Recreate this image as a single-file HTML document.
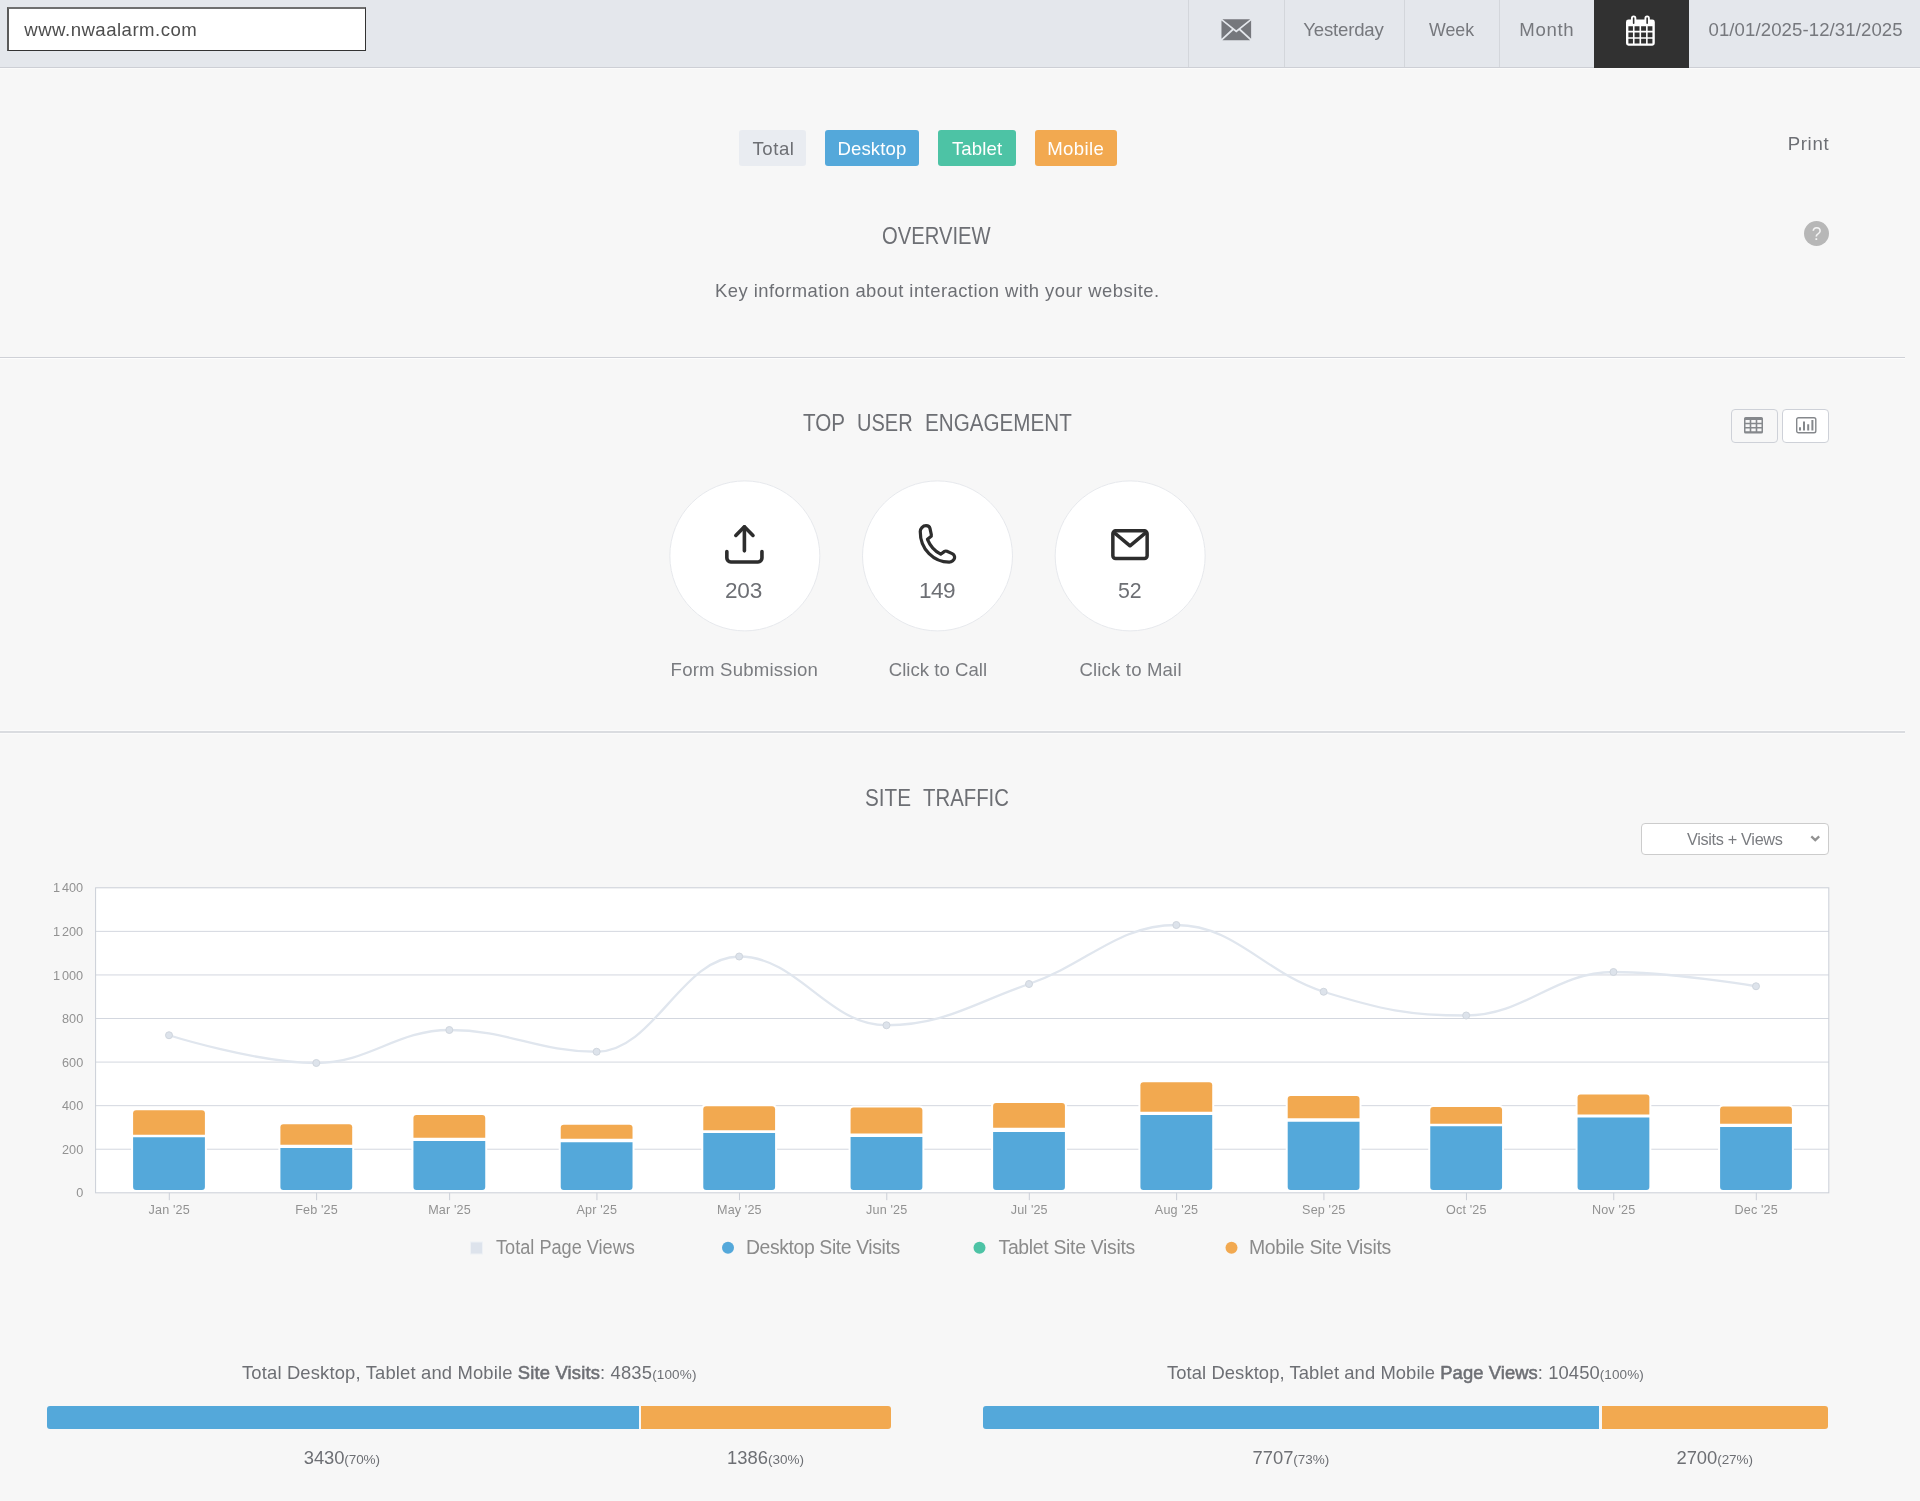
<!DOCTYPE html>
<html lang="en">
<head>
<meta charset="utf-8">
<title>Site Overview - www.nwaalarm.com</title>
<style>
html,body{margin:0;padding:0}
body{width:1920px;height:1501px;overflow:hidden;background:#f7f7f7;font-family:"Liberation Sans",sans-serif;position:relative}
#page{position:absolute;left:0;top:0;width:1920px;height:1501px;overflow:hidden;will-change:transform}
.abs{position:absolute;box-sizing:border-box}
.t{position:absolute;white-space:nowrap;line-height:0;transform-origin:0 0;font-family:"Liberation Sans",sans-serif}
.t::before{content:"";display:inline-block;width:0;height:40px}
.t b{font-weight:400;-webkit-text-stroke:0.55px currentColor}
.topbar{left:0;top:0;width:1920px;height:68px;background:#e4e7ec;border-bottom:1px solid #cdcfd5;box-shadow:0 1px 0 #fbfbfb}
.sep{top:0;width:1px;height:67px;background:#d3d6db}
.hr{left:0;width:1905px;height:2px;border-top:1px solid #cfd1d7;background:#fdfdfd}
.btn{top:130px;height:36px;border-radius:3px}
.vbtn{top:409px;width:47px;height:34px;border:1px solid #ced1d8;border-radius:4px}
.seg{top:1405.5px;height:23.5px}
svg{overflow:visible}
</style>
</head>
<body>
<div id="page">
<!-- top bar -->
<div class="abs topbar"></div>
<div class="abs" style="left:7px;top:7px;width:359px;height:44px;background:#fff;border-style:solid;border-width:2px 1px 1px 2px;border-color:#6f6f6f #333 #333 #5a5a5a"></div>
<div class="abs sep" style="left:1188px"></div>
<div class="abs sep" style="left:1284px"></div>
<div class="abs sep" style="left:1404px"></div>
<div class="abs sep" style="left:1499px"></div>
<div class="abs" style="left:1594px;top:0;width:95px;height:68px;background:#313131"></div>
<!-- envelope icon -->
<svg class="abs" style="left:1220.600px;top:19.200px" width="30.600" height="21.400" viewBox="0 0 32 22">
<path d="M1.5 0H30.5L16 11.5Z M0.5 1.5V20.5L11.5 10.2Z M31.5 1.5V20.5L20.5 10.2Z M13 11.5L16 14L19 11.5L30.5 22H1.5Z" fill="#75777c"/>
</svg>
<!-- calendar icon -->
<svg class="abs" style="left:1626px;top:15px" width="28.800" height="30.800" viewBox="0 0 29 31">
<path fill="#fff" fill-rule="evenodd" d="M2.5 4.5H5V3.2A2.7 2.7 0 0 1 10.4 3.2V4.5H18.6V3.2A2.7 2.7 0 0 1 24 3.2V4.5H26.5A2.5 2.5 0 0 1 29 7V28.5A2.5 2.5 0 0 1 26.500 31H2.500A2.500 2.500 0 0 1 0 28.500V7A2.500 2.500 0 0 1 2.500 4.500Z
M6.9 3.100V8.200A0.800 0.800 0 0 0 8.500 8.200V3.100A0.800 0.800 0 0 0 6.900 3.100Z M20.500 3.100V8.200A0.800 0.800 0 0 0 22.100 8.200V3.100A0.800 0.800 0 0 0 20.500 3.100Z
M2.400 11.300H7V15.900H2.400Z M8.600 11.300H13.600V15.900H8.600Z M15.200 11.300H20.200V15.900H15.200Z M21.800 11.300H26.600V15.900H21.800Z
M2.400 17.500H7V22.300H2.400Z M8.600 17.500H13.600V22.300H8.600Z M15.200 17.500H20.200V22.300H15.200Z M21.800 17.500H26.600V22.300H21.800Z
M2.400 23.900H7V28.600H2.400Z M8.600 23.900H13.600V28.600H8.600Z M15.200 23.900H20.200V28.600H15.200Z M21.800 23.900H26.600V28.600H21.800Z"/>
</svg>
<!-- device buttons -->
<div class="abs btn" style="left:739px;width:67px;background:#e9ecf1"></div>
<div class="abs btn" style="left:825px;width:94px;background:#54a8da"></div>
<div class="abs btn" style="left:938px;width:78px;background:#4dc3a5"></div>
<div class="abs btn" style="left:1034.5px;width:82px;background:#f2a950"></div>
<!-- help -->
<div class="abs" style="left:1804px;top:221px;width:25px;height:25px;border-radius:50%;background:#b7b7b7"></div>
<div class="t" style="left:1811.700px;top:200.300px;font-size:17.500px;color:#f4f4f4">?</div>
<div class="abs hr" style="top:357px"></div>
<div class="abs" style="left:0;top:730px;width:1905px;height:4px;background:#dadce0;border-top:1px solid #fbfbfb;border-bottom:1px solid #fbfbfb"></div>
<!-- view toggle -->
<div class="abs vbtn" style="left:1731px"></div>
<div class="abs vbtn" style="left:1782px;background:#fff"></div>
<svg class="abs" style="left:1744px;top:416.5px" width="19" height="16.5" viewBox="0 0 19 16.5">
<path fill="#85888c" fill-rule="evenodd" d="M1.6 0H17.400A1.600 1.600 0 0 1 19 1.600V14.900A1.600 1.600 0 0 1 17.400 16.500H1.600A1.600 1.600 0 0 1 0 14.900V1.600A1.600 1.600 0 0 1 1.600 0Z
M1.500 3H5.700V5.700H1.500Z M7.300 3H11.700V5.700H7.300Z M13.300 3H17.500V5.700H13.300Z
M1.500 7.300H5.700V10H1.500Z M7.300 7.300H11.700V10H7.300Z M13.300 7.300H17.500V10H13.300Z
M1.500 11.600H5.700V14.300H1.500Z M7.300 11.600H11.700V14.300H7.300Z M13.300 11.600H17.500V14.300H13.300Z"/>
</svg>
<svg class="abs" style="left:1795.500px;top:417px" width="20.500" height="16.500" viewBox="0 0 20.500 16.500">
<rect x="0.700" y="0.700" width="19.100" height="15.100" rx="1.800" fill="none" stroke="#85888c" stroke-width="1.400"/>
<path fill="#85888c" d="M3 10.300H5V13.600H3Z M7 4.500H9V13.600H7Z M11.200 7.200H13.200V13.600H11.200Z M15.400 3H17.400V13.600H15.400Z"/>
</svg>
<!-- engagement circles -->
<svg class="abs" style="left:660px;top:470px" width="560" height="172" viewBox="660 470 560 172">
<circle cx="744.830" cy="555.900" r="75" fill="#fff" stroke="#e6e8ec" stroke-width="1"/>
<circle cx="937.500" cy="555.900" r="75" fill="#fff" stroke="#e6e8ec" stroke-width="1"/>
<circle cx="1130.170" cy="555.900" r="75" fill="#fff" stroke="#e6e8ec" stroke-width="1"/>
</svg>
<!-- upload icon (feather) -->
<svg class="abs" style="left:721px;top:521.300px" width="46.800" height="46.800" viewBox="0 0 24 24" fill="none" stroke="#2d2d2d" stroke-width="1.850" stroke-linecap="round" stroke-linejoin="round">
<path d="M21 15.700v3.300a2 2 0 0 1-2 2H5a2 2 0 0 1-2-2v-3.300"/><polyline points="16.400 7.400 12 3 7.600 7.400"/><line x1="12" y1="3" x2="12" y2="15.300"/>
</svg>
<!-- phone icon -->
<svg class="abs" style="left:910px;top:515px" width="56" height="56" viewBox="0 0 1501 1501" fill="none" stroke="#2d2d2d" stroke-width="86" stroke-linejoin="round" stroke-linecap="round">
<path d="M275 440C275 370 340 285 430 285C490 285 525 310 535 360L572 530C577 555 570 570 552 584L468 652C540 830 670 970 822 1050L925 975C945 962 965 962 990 972L1130 1035C1180 1060 1200 1100 1195 1150C1190 1200 1120 1265 1050 1265C650 1260 270 930 275 440Z"/>
</svg>
<!-- mail icon -->
<svg class="abs" style="left:1111px;top:528.600px" width="38" height="31.400" viewBox="0 0 38 31.400" fill="none" stroke="#2d2d2d" stroke-width="3.500" stroke-linejoin="round" stroke-linecap="round">
<rect x="1.850" y="1.850" width="34.300" height="27.700" rx="2.800"/>
<polyline points="3.200 3.600 19 16.800 34.800 3.600"/>
</svg>
<!-- select -->
<div class="abs" style="left:1640.500px;top:823px;width:188.500px;height:31.500px;background:#fff;border:1px solid #ccc;border-radius:4px"></div>
<svg class="abs" style="left:1809.500px;top:834.800px" width="10.500" height="7" viewBox="0 0 10.500 7"><path d="M1.300 1.400L5.250 5.100L9.200 1.400" fill="none" stroke="#929292" stroke-width="2.300"/></svg>
<svg class="chart" width="1920" height="1501" viewBox="0 0 1920 1501" style="position:absolute;left:0;top:0;font-family:'Liberation Sans',sans-serif">
<rect x="95.6" y="887.8" width="1733.2" height="305.0" fill="#ffffff"/>
<path d="M95.6 931.37H1828.8" stroke="#d3d7df" stroke-width="1" fill="none"/>
<path d="M95.6 974.94H1828.8" stroke="#d3d7df" stroke-width="1" fill="none"/>
<path d="M95.6 1018.51H1828.8" stroke="#d3d7df" stroke-width="1" fill="none"/>
<path d="M95.6 1062.09H1828.8" stroke="#d3d7df" stroke-width="1" fill="none"/>
<path d="M95.6 1105.66H1828.8" stroke="#d3d7df" stroke-width="1" fill="none"/>
<path d="M95.6 1149.23H1828.8" stroke="#d3d7df" stroke-width="1" fill="none"/>
<path d="M169.3 1192.8V1200.2" stroke="#cbcfd7" stroke-width="1" fill="none"/>
<path d="M316.6 1192.8V1200.2" stroke="#cbcfd7" stroke-width="1" fill="none"/>
<path d="M449.64 1192.8V1200.2" stroke="#cbcfd7" stroke-width="1" fill="none"/>
<path d="M596.93 1192.8V1200.2" stroke="#cbcfd7" stroke-width="1" fill="none"/>
<path d="M739.48 1192.8V1200.2" stroke="#cbcfd7" stroke-width="1" fill="none"/>
<path d="M886.78 1192.8V1200.2" stroke="#cbcfd7" stroke-width="1" fill="none"/>
<path d="M1029.32 1192.8V1200.2" stroke="#cbcfd7" stroke-width="1" fill="none"/>
<path d="M1176.62 1192.8V1200.2" stroke="#cbcfd7" stroke-width="1" fill="none"/>
<path d="M1323.91 1192.8V1200.2" stroke="#cbcfd7" stroke-width="1" fill="none"/>
<path d="M1466.46 1192.8V1200.2" stroke="#cbcfd7" stroke-width="1" fill="none"/>
<path d="M1613.76 1192.8V1200.2" stroke="#cbcfd7" stroke-width="1" fill="none"/>
<path d="M1756.3 1192.8V1200.2" stroke="#cbcfd7" stroke-width="1" fill="none"/>
<path d="M169.00 1035.25C169.00 1035.25 257.38 1063.00 316.30 1063.00C369.51 1063.00 396.12 1030.00 449.34 1030.00C508.26 1030.00 537.72 1051.75 596.63 1051.75C653.65 1051.75 682.16 956.50 739.18 956.50C798.10 956.50 827.56 1025.25 886.48 1025.25C943.49 1025.25 972.00 1003.72 1029.02 984.00C1087.94 963.62 1117.40 925.00 1176.32 925.00C1235.24 925.00 1264.70 973.35 1323.61 991.75C1380.63 1009.55 1409.14 1015.50 1466.16 1015.50C1525.08 1015.50 1554.54 972.00 1613.46 972.00C1670.47 972.00 1756.00 986.25 1756.00 986.25" stroke="#e0e6ee" stroke-width="2.3" fill="none" stroke-linecap="round" stroke-linejoin="round"/>
<circle cx="169.00" cy="1035.25" r="3.5" fill="#dde3eb" stroke="#d0d6de" stroke-width="1"/>
<circle cx="316.30" cy="1063.00" r="3.5" fill="#dde3eb" stroke="#d0d6de" stroke-width="1"/>
<circle cx="449.34" cy="1030.00" r="3.5" fill="#dde3eb" stroke="#d0d6de" stroke-width="1"/>
<circle cx="596.63" cy="1051.75" r="3.5" fill="#dde3eb" stroke="#d0d6de" stroke-width="1"/>
<circle cx="739.18" cy="956.50" r="3.5" fill="#dde3eb" stroke="#d0d6de" stroke-width="1"/>
<circle cx="886.48" cy="1025.25" r="3.5" fill="#dde3eb" stroke="#d0d6de" stroke-width="1"/>
<circle cx="1029.02" cy="984.00" r="3.5" fill="#dde3eb" stroke="#d0d6de" stroke-width="1"/>
<circle cx="1176.32" cy="925.00" r="3.5" fill="#dde3eb" stroke="#d0d6de" stroke-width="1"/>
<circle cx="1323.61" cy="991.75" r="3.5" fill="#dde3eb" stroke="#d0d6de" stroke-width="1"/>
<circle cx="1466.16" cy="1015.50" r="3.5" fill="#dde3eb" stroke="#d0d6de" stroke-width="1"/>
<circle cx="1613.46" cy="972.00" r="3.5" fill="#dde3eb" stroke="#d0d6de" stroke-width="1"/>
<circle cx="1756.00" cy="986.25" r="3.5" fill="#dde3eb" stroke="#d0d6de" stroke-width="1"/>
<rect x="131.10" y="1108.35" width="75.80" height="83.75" rx="4.5" fill="#ffffff"/>
<path d="M133.10 1134.70V1113.35Q133.10 1110.35 136.10 1110.35H201.90Q204.90 1110.35 204.90 1113.35V1134.70Z" fill="#f2a950"/>
<path d="M133.10 1137.30H204.90V1187.10Q204.90 1190.10 201.90 1190.10H136.10Q133.10 1190.10 133.10 1187.10Z" fill="#54a8da"/>
<rect x="278.40" y="1122.20" width="75.80" height="69.90" rx="4.5" fill="#ffffff"/>
<path d="M280.40 1144.75V1127.20Q280.40 1124.20 283.40 1124.20H349.20Q352.20 1124.20 352.20 1127.20V1144.75Z" fill="#f2a950"/>
<path d="M280.40 1148.10H352.20V1187.10Q352.20 1190.10 349.20 1190.10H283.40Q280.40 1190.10 280.40 1187.10Z" fill="#54a8da"/>
<rect x="411.44" y="1113.10" width="75.80" height="79.00" rx="4.5" fill="#ffffff"/>
<path d="M413.44 1137.70V1118.10Q413.44 1115.10 416.44 1115.10H482.24Q485.24 1115.10 485.24 1118.10V1137.70Z" fill="#f2a950"/>
<path d="M413.44 1141.10H485.24V1187.10Q485.24 1190.10 482.24 1190.10H416.44Q413.44 1190.10 413.44 1187.10Z" fill="#54a8da"/>
<rect x="558.74" y="1122.85" width="75.80" height="69.25" rx="4.5" fill="#ffffff"/>
<path d="M560.74 1138.65V1127.85Q560.74 1124.85 563.74 1124.85H629.53Q632.53 1124.85 632.53 1127.85V1138.65Z" fill="#f2a950"/>
<path d="M560.74 1142.20H632.53V1187.10Q632.53 1190.10 629.53 1190.10H563.74Q560.74 1190.10 560.74 1187.10Z" fill="#54a8da"/>
<rect x="701.28" y="1104.30" width="75.80" height="87.80" rx="4.5" fill="#ffffff"/>
<path d="M703.28 1130.25V1109.30Q703.28 1106.30 706.28 1106.30H772.08Q775.08 1106.30 775.08 1109.30V1130.25Z" fill="#f2a950"/>
<path d="M703.28 1133.10H775.08V1187.10Q775.08 1190.10 772.08 1190.10H706.28Q703.28 1190.10 703.28 1187.10Z" fill="#54a8da"/>
<rect x="848.58" y="1105.50" width="75.80" height="86.60" rx="4.5" fill="#ffffff"/>
<path d="M850.58 1133.40V1110.50Q850.58 1107.50 853.58 1107.50H919.38Q922.38 1107.50 922.38 1110.50V1133.40Z" fill="#f2a950"/>
<path d="M850.58 1136.90H922.38V1187.10Q922.38 1190.10 919.38 1190.10H853.58Q850.58 1190.10 850.58 1187.10Z" fill="#54a8da"/>
<rect x="991.12" y="1100.90" width="75.80" height="91.20" rx="4.5" fill="#ffffff"/>
<path d="M993.12 1127.80V1105.90Q993.12 1102.90 996.12 1102.90H1061.92Q1064.92 1102.90 1064.92 1105.90V1127.80Z" fill="#f2a950"/>
<path d="M993.12 1132.00H1064.92V1187.10Q1064.92 1190.10 1061.92 1190.10H996.12Q993.12 1190.10 993.12 1187.10Z" fill="#54a8da"/>
<rect x="1138.42" y="1080.20" width="75.80" height="111.90" rx="4.5" fill="#ffffff"/>
<path d="M1140.42 1111.70V1085.20Q1140.42 1082.20 1143.42 1082.20H1209.22Q1212.22 1082.20 1212.22 1085.20V1111.70Z" fill="#f2a950"/>
<path d="M1140.42 1115.10H1212.22V1187.10Q1212.22 1190.10 1209.22 1190.10H1143.42Q1140.42 1190.10 1140.42 1187.10Z" fill="#54a8da"/>
<rect x="1285.71" y="1094.10" width="75.80" height="98.00" rx="4.5" fill="#ffffff"/>
<path d="M1287.71 1118.30V1099.10Q1287.71 1096.10 1290.71 1096.10H1356.51Q1359.51 1096.10 1359.51 1099.10V1118.30Z" fill="#f2a950"/>
<path d="M1287.71 1121.70H1359.51V1187.10Q1359.51 1190.10 1356.51 1190.10H1290.71Q1287.71 1190.10 1287.71 1187.10Z" fill="#54a8da"/>
<rect x="1428.26" y="1105.00" width="75.80" height="87.10" rx="4.5" fill="#ffffff"/>
<path d="M1430.26 1123.75V1110.00Q1430.26 1107.00 1433.26 1107.00H1499.06Q1502.06 1107.00 1502.06 1110.00V1123.75Z" fill="#f2a950"/>
<path d="M1430.26 1126.20H1502.06V1187.10Q1502.06 1190.10 1499.06 1190.10H1433.26Q1430.26 1190.10 1430.26 1187.10Z" fill="#54a8da"/>
<rect x="1575.56" y="1092.50" width="75.80" height="99.60" rx="4.5" fill="#ffffff"/>
<path d="M1577.56 1114.40V1097.50Q1577.56 1094.50 1580.56 1094.50H1646.36Q1649.36 1094.50 1649.36 1097.50V1114.40Z" fill="#f2a950"/>
<path d="M1577.56 1117.40H1649.36V1187.10Q1649.36 1190.10 1646.36 1190.10H1580.56Q1577.56 1190.10 1577.56 1187.10Z" fill="#54a8da"/>
<rect x="1718.10" y="1104.60" width="75.80" height="87.50" rx="4.5" fill="#ffffff"/>
<path d="M1720.10 1123.75V1109.60Q1720.10 1106.60 1723.10 1106.60H1788.90Q1791.90 1106.60 1791.90 1109.60V1123.75Z" fill="#f2a950"/>
<path d="M1720.10 1127.10H1791.90V1187.10Q1791.90 1190.10 1788.90 1190.10H1723.10Q1720.10 1190.10 1720.10 1187.10Z" fill="#54a8da"/>
<rect x="95.6" y="887.8" width="1733.2" height="305.0" fill="none" stroke="#cbcfd7" stroke-width="1"/>
<text x="83.2" y="892.43" text-anchor="end" fill="#929292" font-size="12.7" word-spacing="-1.6">1 400</text>
<text x="83.2" y="936.00" text-anchor="end" fill="#929292" font-size="12.7" word-spacing="-1.6">1 200</text>
<text x="83.2" y="979.57" text-anchor="end" fill="#929292" font-size="12.7" word-spacing="-1.6">1 000</text>
<text x="83.2" y="1023.14" text-anchor="end" fill="#929292" font-size="12.7" word-spacing="-1.6">800</text>
<text x="83.2" y="1066.72" text-anchor="end" fill="#929292" font-size="12.7" word-spacing="-1.6">600</text>
<text x="83.2" y="1110.29" text-anchor="end" fill="#929292" font-size="12.7" word-spacing="-1.6">400</text>
<text x="83.2" y="1153.86" text-anchor="end" fill="#929292" font-size="12.7" word-spacing="-1.6">200</text>
<text x="83.2" y="1197.43" text-anchor="end" fill="#929292" font-size="12.7" word-spacing="-1.6">0</text>
<text x="169.20" y="1213.85" text-anchor="middle" fill="#929292" font-size="12.6" letter-spacing="0.15">Jan '25</text>
<text x="316.50" y="1213.85" text-anchor="middle" fill="#929292" font-size="12.6" letter-spacing="0.15">Feb '25</text>
<text x="449.54" y="1213.85" text-anchor="middle" fill="#929292" font-size="12.6" letter-spacing="0.15">Mar '25</text>
<text x="596.84" y="1213.85" text-anchor="middle" fill="#929292" font-size="12.6" letter-spacing="0.15">Apr '25</text>
<text x="739.38" y="1213.85" text-anchor="middle" fill="#929292" font-size="12.6" letter-spacing="0.15">May '25</text>
<text x="886.68" y="1213.85" text-anchor="middle" fill="#929292" font-size="12.6" letter-spacing="0.15">Jun '25</text>
<text x="1029.22" y="1213.85" text-anchor="middle" fill="#929292" font-size="12.6" letter-spacing="0.15">Jul '25</text>
<text x="1176.52" y="1213.85" text-anchor="middle" fill="#929292" font-size="12.6" letter-spacing="0.15">Aug '25</text>
<text x="1323.81" y="1213.85" text-anchor="middle" fill="#929292" font-size="12.6" letter-spacing="0.15">Sep '25</text>
<text x="1466.36" y="1213.85" text-anchor="middle" fill="#929292" font-size="12.6" letter-spacing="0.15">Oct '25</text>
<text x="1613.66" y="1213.85" text-anchor="middle" fill="#929292" font-size="12.6" letter-spacing="0.15">Nov '25</text>
<text x="1756.20" y="1213.85" text-anchor="middle" fill="#929292" font-size="12.6" letter-spacing="0.15">Dec '25</text>
<rect x="470.5" y="1242" width="12" height="12" fill="#dde3ec" stroke="#eef1f5" stroke-width="1"/>
<circle cx="728" cy="1247.8" r="6" fill="#54a8da"/>
<circle cx="979.5" cy="1247.8" r="6" fill="#4dc3a5"/>
<circle cx="1231.5" cy="1247.8" r="6" fill="#f2a950"/>
</svg>
<!-- summary bars -->
<div class="abs seg" style="left:47px;width:592px;background:#54a8da;border-radius:3px 0 0 3px"></div>
<div class="abs seg" style="left:641px;width:250px;background:#f2a950;border-radius:0 3px 3px 0"></div>
<div class="abs seg" style="left:983px;width:616.400px;background:#54a8da;border-radius:3px 0 0 3px"></div>
<div class="abs seg" style="left:1602px;width:225.500px;background:#f2a950;border-radius:0 3px 3px 0"></div>
<div class="t" style="left:24.30px;top:-4.00px;font-size:18.6px;letter-spacing:0.478px;color:#4e4e4e">www.nwaalarm.com</div>
<div class="t" style="left:1303.30px;top:-4.20px;font-size:18.6px;letter-spacing:-0.189px;color:#76787d">Yesterday</div>
<div class="t" style="left:1429.20px;top:-4.20px;font-size:18.6px;transform:scaleX(0.9542);color:#76787d">Week</div>
<div class="t" style="left:1519.30px;top:-4.20px;font-size:18.6px;letter-spacing:0.666px;color:#76787d">Month</div>
<div class="t" style="left:1708.50px;top:-4.40px;font-size:18.6px;letter-spacing:0.089px;color:#76787d">01/01/2025-12/31/2025</div>
<div class="t" style="left:752.40px;top:114.85px;font-size:18.6px;letter-spacing:0.576px;color:#6d6f74">Total</div>
<div class="t" style="left:837.40px;top:114.85px;font-size:18.6px;letter-spacing:0.122px;color:#ffffff">Desktop</div>
<div class="t" style="left:951.90px;top:114.85px;font-size:18.6px;letter-spacing:0.150px;color:#ffffff">Tablet</div>
<div class="t" style="left:1047.20px;top:114.85px;font-size:18.6px;letter-spacing:0.373px;color:#ffffff">Mobile</div>
<div class="t" style="left:1787.70px;top:110.40px;font-size:18.6px;letter-spacing:0.659px;color:#6d6f74">Print</div>
<div class="t" style="left:882.37px;top:203.75px;font-size:23px;transform:scaleX(0.8792);color:#6d6f74">OVERVIEW</div>
<div class="t" style="left:715.00px;top:257.00px;font-size:18.4px;letter-spacing:0.470px;color:#6d6f74">Key information about interaction with your website.</div>
<div class="t" style="left:803.00px;top:391.20px;font-size:23px;transform:scaleX(0.8963);color:#6d6f74">TOP</div>
<div class="t" style="left:857.43px;top:391.20px;font-size:23px;transform:scaleX(0.8701);color:#6d6f74">USER</div>
<div class="t" style="left:924.90px;top:391.20px;font-size:23px;transform:scaleX(0.8977);color:#6d6f74">ENGAGEMENT</div>
<div class="t" style="left:725.00px;top:557.60px;font-size:22.6px;letter-spacing:-0.216px;color:#6d6f74">203</div>
<div class="t" style="left:919.00px;top:557.60px;font-size:22.6px;letter-spacing:-0.516px;color:#6d6f74">149</div>
<div class="t" style="left:1118.20px;top:557.60px;font-size:22.6px;transform:scaleX(0.9444);color:#6d6f74">52</div>
<div class="t" style="left:670.60px;top:636.10px;font-size:18.6px;letter-spacing:0.192px;color:#7a7c80">Form Submission</div>
<div class="t" style="left:888.70px;top:636.10px;font-size:18.6px;letter-spacing:0.023px;color:#7a7c80">Click to Call</div>
<div class="t" style="left:1079.40px;top:636.10px;font-size:18.6px;letter-spacing:0.160px;color:#7a7c80">Click to Mail</div>
<div class="t" style="left:865.10px;top:765.90px;font-size:23px;transform:scaleX(0.9000);color:#6d6f74">SITE</div>
<div class="t" style="left:922.80px;top:765.90px;font-size:23px;transform:scaleX(0.8851);color:#6d6f74">TRAFFIC</div>
<div class="t" style="left:1686.90px;top:805.00px;font-size:16.3px;letter-spacing:-0.327px;color:#7a7c80">Visits + Views</div>
<div class="t" style="left:495.50px;top:1214.20px;font-size:19.4px;transform:scaleX(0.9360);color:#8b8b8b">Total Page Views</div>
<div class="t" style="left:746.00px;top:1214.20px;font-size:19.4px;letter-spacing:-0.395px;color:#8b8b8b">Desktop Site Visits</div>
<div class="t" style="left:998.50px;top:1214.20px;font-size:19.4px;letter-spacing:-0.307px;color:#8b8b8b">Tablet Site Visits</div>
<div class="t" style="left:1249.00px;top:1214.20px;font-size:19.4px;letter-spacing:-0.299px;color:#8b8b8b">Mobile Site Visits</div>
<div class="t" style="left:242.00px;top:1338.75px;font-size:18.4px;letter-spacing:0.160px;color:#6d6f74">Total Desktop, Tablet and Mobile <b>Site Visits</b>: 4835<span style="font-size:13.5px">(100%)</span></div>
<div class="t" style="left:1167.00px;top:1338.75px;font-size:18.4px;letter-spacing:0.081px;color:#6d6f74">Total Desktop, Tablet and Mobile <b>Page Views</b>: 10450<span style="font-size:13.5px">(100%)</span></div>
<div class="t" style="left:303.75px;top:1423.75px;font-size:18.4px;letter-spacing:-0.085px;color:#6d6f74">3430<span style="font-size:13.5px">(70%)</span></div>
<div class="t" style="left:727.00px;top:1423.75px;font-size:18.4px;letter-spacing:0.009px;color:#6d6f74">1386<span style="font-size:13.5px">(30%)</span></div>
<div class="t" style="left:1252.50px;top:1423.75px;font-size:18.4px;letter-spacing:-0.016px;color:#6d6f74">7707<span style="font-size:13.5px">(73%)</span></div>
<div class="t" style="left:1676.50px;top:1423.75px;font-size:18.4px;letter-spacing:-0.053px;color:#6d6f74">2700<span style="font-size:13.5px">(27%)</span></div>
</div>
</body>
</html>
